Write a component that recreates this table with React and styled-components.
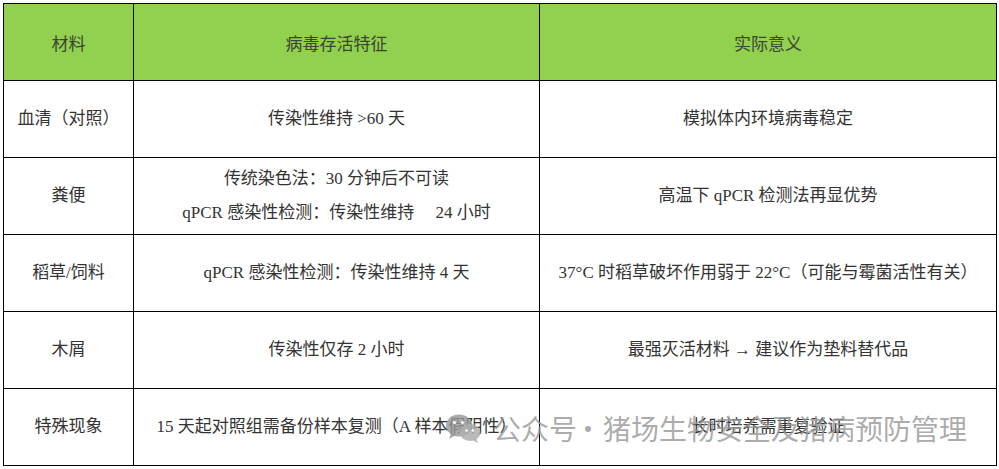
import React from 'react'
import styled, { createGlobalStyle } from 'styled-components'

const GlobalStyle = createGlobalStyle`
  html, body {
    margin: 0;
    padding: 0;
    background: #fff;
  }
  body {
    font-family: "Liberation Serif", "Noto Sans CJK SC", serif;
  }
`

const Page = styled.div`
  position: relative;
  width: 999px;
  height: 469px;
  padding: 3px 0 0 3px;
  box-sizing: border-box;
`

const Table = styled.table`
  border-collapse: collapse;
  width: 993px;
  table-layout: fixed;
  color: #333;
  font-size: 17px;
`

const HeadCell = styled.th`
  background: #92d050;
  border: 1px solid #000;
  height: 76px;
  padding: 0;
  font-weight: 400;
  text-align: center;
  color: #3b4531;
`

const Cell = styled.td`
  border: 1px solid #000;
  height: 76px;
  padding: 0;
  text-align: center;
  vertical-align: middle;
  line-height: 34px;
`

const Watermark = styled.div`
  position: absolute;
  left: 445px;
  top: 411px;
  display: flex;
  align-items: center;
  font-family: "Noto Sans CJK SC", sans-serif;
  font-size: 28px;
  line-height: 34px;
  color: rgba(150, 150, 150, 0.8);
  white-space: nowrap;
  pointer-events: none;
`

const MarkText = styled.span`
  margin-left: ${(p) => p.$gap}px;
`

const rows = [
  { name: '血清（对照）', feature: ['传染性维持 >60 天'], meaning: '模拟体内环境病毒稳定' },
  {
    name: '粪便',
    feature: ['传统染色法：30 分钟后不可读', 'qPCR 感染性检测：传染性维持\u2003 24 小时'],
    meaning: '高温下 qPCR 检测法再显优势',
  },
  { name: '稻草/饲料', feature: ['qPCR 感染性检测：传染性维持 4 天'], meaning: '37°C 时稻草破坏作用弱于 22°C（可能与霉菌活性有关）' },
  { name: '木屑', feature: ['传染性仅存 2 小时'], meaning: '最强灭活材料 → 建议作为垫料替代品' },
  { name: '特殊现象', feature: ['15 天起对照组需备份样本复测（A 样本假阴性）'], meaning: '长时培养需重复验证' },
]

function WechatIcon() {
  return (
    <svg width="37" height="31" viewBox="0 0 37 31">
      <ellipse cx="14" cy="12.5" rx="13" ry="11" fill="rgba(150,150,150,0.8)" />
      <path d="M6 20 L4 26 L11 22 Z" fill="rgba(150,150,150,0.8)" />
      <ellipse cx="25" cy="19.5" rx="10.5" ry="8.5" fill="rgba(175,175,175,0.85)" />
      <path d="M31 25 L33 30 L27 27 Z" fill="rgba(175,175,175,0.85)" />
      <circle cx="9.5" cy="9.5" r="1.6" fill="#fff" />
      <circle cx="17.5" cy="9.5" r="1.6" fill="#fff" />
      <circle cx="21.5" cy="17.5" r="1.3" fill="#fff" />
      <circle cx="28" cy="17.5" r="1.3" fill="#fff" />
    </svg>
  )
}

export default function App() {
  return (
    <Page>
      <GlobalStyle />
      <Table>
        <colgroup>
          <col style={{ width: 130 }} />
          <col style={{ width: 406 }} />
          <col style={{ width: 457 }} />
        </colgroup>
        <thead>
          <tr>
            <HeadCell>材料</HeadCell>
            <HeadCell>病毒存活特征</HeadCell>
            <HeadCell>实际意义</HeadCell>
          </tr>
        </thead>
        <tbody>
          {rows.map((r) => (
            <tr key={r.name}>
              <Cell>{r.name}</Cell>
              <Cell>
                {r.feature.map((f) => (
                  <div key={f}>{f}</div>
                ))}
              </Cell>
              <Cell>{r.meaning}</Cell>
            </tr>
          ))}
        </tbody>
      </Table>
      <Watermark>
        <WechatIcon />
        <MarkText $gap={11}>公众号</MarkText>
        <MarkText $gap={-3}>·</MarkText>
        <MarkText $gap={1}>猪场生物安全及猪病预防管理</MarkText>
      </Watermark>
    </Page>
  )
}
